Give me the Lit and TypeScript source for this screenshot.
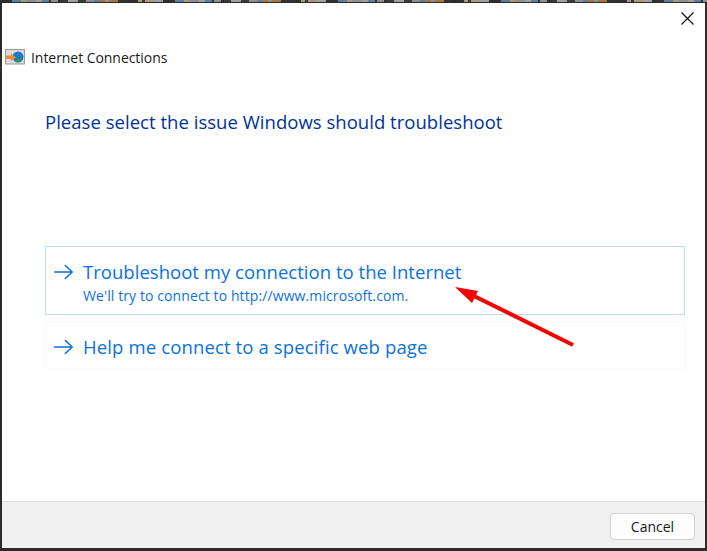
import { LitElement, html, css, svg } from "lit";
import { customElement } from "lit/decorators.js";

const palette = ["#8f8f8f", "#2f2f2f", "#a89a7c", "#3a3a3a", "#8f8f8f", "#a8763f", "#2f2f2f", "#a0a0a0", "#5a7f9f", "#333333"];
const strip: [string, number][] = [];
for (let i = 0, x = 0, s = 7; x < 707; i++) {
  s = (s * 31 + 11) % 101;
  const w = 2 + (s % 9);
  strip.push([palette[s % palette.length], w]);
  x += w;
}

const arrow = html`<svg viewBox="0 0 24 20" class="arrow" aria-hidden="true">
  <path d="M1 10H21M13 2.500L21 10L13 17.500" fill="none" stroke="currentColor" stroke-width="1.500"/>
</svg>`;

@customElement("app-root")
export class AppRoot extends LitElement {
  static styles = css`
    :host {
      display: block;
      width: 707px;
      height: 551px;
      font-family: "Open Sans", "Noto Sans", sans-serif;
      background: #2b2b2b;
      overflow: hidden;
      position: relative;
    }
    .frame {
      display: flex;
      flex-direction: column;
      height: 551px;
      box-sizing: border-box;
      padding: 0 2px 3px 2px;
    }
    .strip { display: flex; height: 2px; flex: none; margin: 0 -2px 1px -2px; overflow: hidden; }
    .strip span { flex: none; }
    .window { flex: 1; display: flex; flex-direction: column; background: #fff; min-height: 0; }
    .titlebar { display: flex; justify-content: flex-end; padding: 9px 11px 0 0; height: 14px; flex: none; }
    .close { width: 13px; height: 13px; display: block; }
    .app { display: flex; align-items: center; gap: 6px; margin: 21px 0 0 3px; height: 20px; }
    .appicon { width: 20px; height: 16px; display: block; flex: none; }
    .apptitle { font-size: 14px; letter-spacing: -0.05px; color: #1a1a1a; }
    .heading {
      margin: 42px 0 0 43px;
      font-size: 18.500px;
      font-weight: 400;
      color: #003399;
      line-height: 26px;
      letter-spacing: 0.030px;
    }
    .options { display: flex; flex-direction: column; gap: 6px; margin: 111px 20px 0 43px; }
    .option {
      display: flex;
      gap: 8px;
      box-sizing: border-box;
      padding: 12px 8px 0 7px;
      color: #0a72e0;
      border: 1px solid #fafafa;
    }
    .first { height: 69px; border-color: #bcdcf4; }
    .second { height: 48px; }
    .second .label { letter-spacing: 0.130px; }
    .arrow { width: 22px; height: 20px; flex: none; display: block; margin-top: 3px; }
    .label { font-size: 18.500px; line-height: 26px; letter-spacing: 0.030px; white-space: nowrap; }
    .sub { font-size: 14px; line-height: 20px; letter-spacing: 0.100px; white-space: nowrap; padding-top: 1px; }
    .footer {
      margin-top: auto;
      height: 47px;
      flex: none;
      background: #f0f0f0;
      border-top: 1px solid #dfdfdf;
      display: flex;
      justify-content: flex-end;
      align-items: flex-start;
      padding: 11px 10px 0 0;
      box-sizing: border-box;
    }
    .cancel {
      width: 85px;
      height: 27px;
      box-sizing: border-box;
      border: 1px solid #d0d0d0;
      border-radius: 4px;
      background: #fdfdfd;
      font: inherit;
      font-size: 14px;
      letter-spacing: 0;
      color: #1a1a1a;
      padding: 0;
    }
    .pointer { position: absolute; left: 450px; top: 280px; width: 130px; height: 75px; }
  `;

  render() {
    return html`
      <div class="frame">
        <div class="strip">
          ${strip.map(([c, w]) => html`<span style="background:${c};width:${w}px"></span>`)}
        </div>
        <div class="window">
          <div class="titlebar">
            <svg class="close" viewBox="0 0 13 13" aria-hidden="true">
              <path d="M0.500 0.500L12.500 12.500M12.500 0.500L0.500 12.500" stroke="#111" stroke-width="1.200" fill="none"/>
            </svg>
          </div>
          <div class="app">
            <svg class="appicon" viewBox="0 0 20 16" aria-hidden="true">
              <rect x="0.500" y="0.500" width="19" height="14.500" fill="#dcdcdc" stroke="#9a9a9a"/>
              <circle cx="13" cy="8" r="5.500" fill="#1d78c8"/>
              <path d="M10 12.500a5.500 5.500 0 0 0 7-2l-3-2z" fill="#2a9a4a"/>
              <path d="M1 6.500H6V4.500L11 8.500L6 12V10H1z" fill="#ee8a3a"/>
            </svg>
            <span class="apptitle">Internet Connections</span>
          </div>
          <h1 class="heading">Please select the issue Windows should troubleshoot</h1>
          <div class="options">
            <div class="option first">
              ${arrow}
              <div>
                <div class="label">Troubleshoot my connection to the Internet</div>
                <div class="sub">We'll try to connect to http://www.microsoft.com.</div>
              </div>
            </div>
            <div class="option second">
              ${arrow}
              <div class="label">Help me connect to a specific web page</div>
            </div>
          </div>
          <div class="footer"><button class="cancel">Cancel</button></div>
        </div>
      </div>
      <svg class="pointer" viewBox="0 0 130 75" aria-hidden="true">
        ${svg`<path d="M123 65L22 15" stroke="#f60000" stroke-width="4" fill="none"/>
        <path d="M5 7L28 11L22 23z" fill="#f60000"/>`}
      </svg>
    `;
  }
}
